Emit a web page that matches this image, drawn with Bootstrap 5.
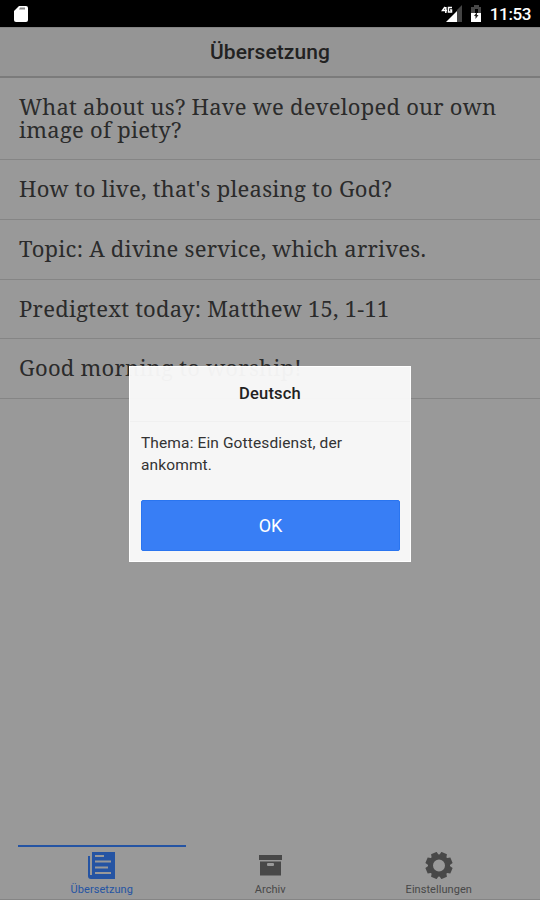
<!DOCTYPE html>
<html lang="de">
<head>
<meta charset="utf-8">
<meta name="viewport" content="width=device-width, initial-scale=1">
<title>Übersetzung</title>
<link href="https://cdn.jsdelivr.net/npm/bootstrap@5.3.0/dist/css/bootstrap.min.css" rel="stylesheet">
<style>
body { height: 900px; background: #999; font-family: Roboto, sans-serif; overflow: hidden; }
.screen { height: 900px; }
.status-bar { height: 27px; padding: 0 9px 0 13px; background: #000; color: #fff; }
.clock { font-size: 17px; font-weight: 500; line-height: 28px; margin-left: 7px; letter-spacing: -.4px; }
.title-bar { height: 51px; background: #959595; border-top: 1px solid #858585; border-bottom: 2px solid #7b7b7b; }
.title-bar h1 { font-size: 21px; font-weight: 500; letter-spacing: .1px; color: #222; line-height: 48px; }
.phrases { --bs-list-group-bg: transparent; }
.phrases .list-group-item { height: 59.800px; padding: 17px 19px; border: 0; border-bottom: 1px solid #858585; color: #2b2b2b; font-family: "Noto Serif", "DejaVu Serif Condensed", serif; font-size: 22px; letter-spacing: .24px; line-height: 23px; white-space: nowrap; }
.phrases .list-group-item:first-child { height: 82px; }
.phrases .list-group-item:last-child { border-bottom: 1px solid #858585; }
.tab { width: 168.500px; height: 54px; color: #484848; font-size: 11px; line-height: 14px; border-top: 2px solid transparent; padding-top: 5px; }
.tab span { letter-spacing: .05px; }
.tab.current { color: #2554a3; border-top-color: #2554a3; }
.tab svg { display: block; margin-bottom: 4px; }
.tab-row { padding: 0 17px 0 17.500px; border-bottom: 1px solid #858585; }
.dialog-layer { position: absolute; left: 129px; top: 366px; width: 282px; height: 196px; background: rgba(250,250,250,.96); border: 1px solid #fff; }
.dialog-title { height: 55px; font-size: 16.500px; font-weight: 500; letter-spacing: .2px; line-height: 53px; color: #222; border-bottom: 1px solid #f0f0f0; }
.dialog-copy { height: 78px; padding: 10px 11px; font-size: 15.500px; letter-spacing: .12px; line-height: 22px; color: #333; }
.dialog-ok { --bs-btn-bg: #387ef5; --bs-btn-border-color: #2a75f0; --bs-btn-border-radius: 2px; width: 259px; height: 51px; font-size: 18px; line-height: 1; margin-left: 11px; }
</style>
<script src="https://cdn.jsdelivr.net/npm/bootstrap@5.3.0/dist/js/bootstrap.bundle.min.js"></script>
</head>
<body>
<div class="screen d-flex flex-column position-relative">
  <div class="status-bar d-flex align-items-center justify-content-between">
    <svg width="16" height="18" viewBox="0 0 16 18"><path d="M6 1h7q2 0 2 2v12q0 2-2 2H3q-2 0-2-2V6z" fill="#fff"/><path d="M7 2.500h5v2H6z" fill="#888"/></svg>
    <div class="d-flex align-items-center">
      <svg width="42" height="22" viewBox="0 0 42 22"><path d="M16 7l5-5v17h-5z" fill="#444"/><path d="M5 19L16 8v11z" fill="#fff"/><g fill="none" stroke="#fff" stroke-width="1.500"><path d="M4 4L1.500 7.500H6M4.800 4v6M11 4.500H7.500v4.500h3V7H9"/></g><path d="M30 4h3V2h5v2h2v6h-3V6h-3v4h-4z" fill="#484848"/><path d="M30 10h10v9H30z" fill="#fff"/><path d="M36 9l-3 4h1.500v3l3-4H36z" fill="#222"/></svg>
      <span class="clock">11:53</span>
    </div>
  </div>
  <header class="title-bar text-center"><h1 class="m-0">Übersetzung</h1></header>
  <main class="flex-grow-1">
    <ul class="phrases list-group list-group-flush">
      <li class="list-group-item">What about us? Have we developed our own<br>image of piety?</li>
      <li class="list-group-item">How to live, that's pleasing to God?</li>
      <li class="list-group-item">Topic: A divine service, which arrives.</li>
      <li class="list-group-item">Predigtext today: Matthew 15, 1-11</li>
      <li class="list-group-item">Good morning to worship!</li>
    </ul>
  </main>
  <nav class="tab-row d-flex">
    <div class="tab current d-flex flex-column align-items-center">
      <svg width="28" height="27" viewBox="0 0 28 27"><path d="M4 0h23v27H3q-3 0-3-3V4h2v19h2z" fill="#2554a3"/><path d="M7 4h9M7 9.500h16M7 15.500h13M7 21h16" stroke="#999" stroke-width="2"/></svg>
      <span>Übersetzung</span>
    </div>
    <div class="tab d-flex flex-column align-items-center">
      <svg width="28" height="27" viewBox="0 0 28 27"><path d="M3 3h23v5H3zM4 9.500h21V23.500H4z" fill="#484848"/><rect x="11" y="11" width="7" height="3" rx="1" fill="#999"/></svg>
      <span>Archiv</span>
    </div>
    <div class="tab d-flex flex-column align-items-center">
      <svg width="28" height="27" viewBox="-14 -13.500 28 27"><circle r="8.500" fill="none" stroke="#484848" stroke-width="5"/><g fill="#484848"><path id="tooth" d="M-4-9l1-4.500h6L4-9z" transform="rotate(22.500)"/><use href="#tooth" transform="rotate(45)"/><use href="#tooth" transform="rotate(90)"/><use href="#tooth" transform="rotate(135)"/><use href="#tooth" transform="rotate(180)"/><use href="#tooth" transform="rotate(225)"/><use href="#tooth" transform="rotate(270)"/><use href="#tooth" transform="rotate(315)"/></g></svg>
      <span>Einstellungen</span>
    </div>
  </nav>
  <section class="dialog-layer" role="dialog" aria-label="Deutsch">
    <h2 class="dialog-title text-center m-0">Deutsch</h2>
    <p class="dialog-copy m-0">Thema: Ein Gottesdienst, der<br>ankommt.</p>
    <button class="dialog-ok btn btn-primary p-0">OK</button>
  </section>
</div>
</body>
</html>
